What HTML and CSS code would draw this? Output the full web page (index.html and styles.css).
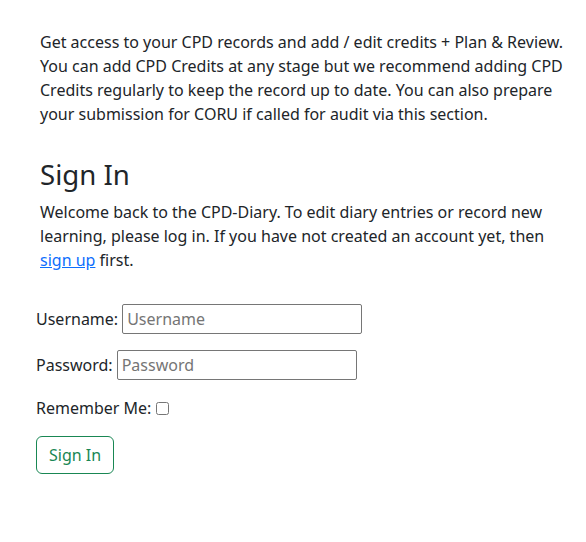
FILE: index.html
```html
<!DOCTYPE html>
<html lang="en">
<head>
<meta charset="utf-8">
<title>Sign In</title>
<link rel="stylesheet" href="styles.css">
</head>
<body>
<main class="page">
  <section class="intro">
    <p class="lead-text">Get access to your CPD records and add / edit credits + Plan &amp; Review. You can add CPD Credits at any stage but we recommend adding CPD Credits regularly to keep the record up to date. You can also prepare your submission for CORU if called for audit via this section.</p>
    <h2 class="title">Sign In</h2>
    <p class="welcome">Welcome back to the CPD-Diary. To edit diary entries or record new learning, please log in. If you have not created an account yet, then <a href="#" class="link">sign up</a> first.</p>
  </section>
  <form class="login" action="#">
    <div class="row">
      <label for="username">Username:</label>
      <input id="username" class="field" type="text" placeholder="Username">
    </div>
    <div class="row">
      <label for="password">Password:</label>
      <input id="password" class="field" type="password" placeholder="Password">
    </div>
    <div class="row check-row">
      <label for="remember">Remember Me:</label>
      <input id="remember" class="check" type="checkbox">
    </div>
    <div class="row">
      <button type="submit" class="btn">Sign In</button>
    </div>
  </form>
</main>
</body>
</html>
```
FILE: styles.css
```css
* { box-sizing: border-box; }
html, body {
  margin: 0;
  padding: 0;
  background: #fff;
}
body {
  font-family: "Noto Sans", sans-serif;
  font-size: 16px;
  line-height: 24px;
  color: #212529;
}
.page {
  padding: 30px 20px 40px 0;
}
.intro {
  padding-left: 40px;
}
.lead-text {
  margin: 0;
}
.title {
  margin: 31.5px 0 9.4px;
  font-size: 27.6px;
  line-height: 1.2;
  font-weight: 400;
}
.welcome {
  margin: 0;
}
.link {
  color: #0d6efd;
  text-decoration: underline;
}
.login {
  padding: 32px 0 0 36px;
  display: flex;
  flex-direction: column;
  gap: 16px;
}
.row {
  display: flex;
  align-items: center;
  gap: 4px;
}
.check-row {
  gap: 5px;
}
.field {
  width: 240px;
  height: 30px;
  padding: 1px 4px;
  border: 1px solid #767676;
  border-radius: 2px;
  font-family: "Noto Sans", sans-serif;
  font-size: 16px;
  color: #212529;
  background: #fff;
}
.field::placeholder {
  color: #757575;
}
.check {
  margin: 0;
  width: 13px;
  height: 13px;
}
.btn {
  font-family: "Noto Sans", sans-serif;
  font-size: 16px;
  line-height: 24px;
  padding: 6px 12px;
  color: #198754;
  background: #fff;
  border: 1px solid #198754;
  border-radius: 6px;
  cursor: pointer;
}
```
